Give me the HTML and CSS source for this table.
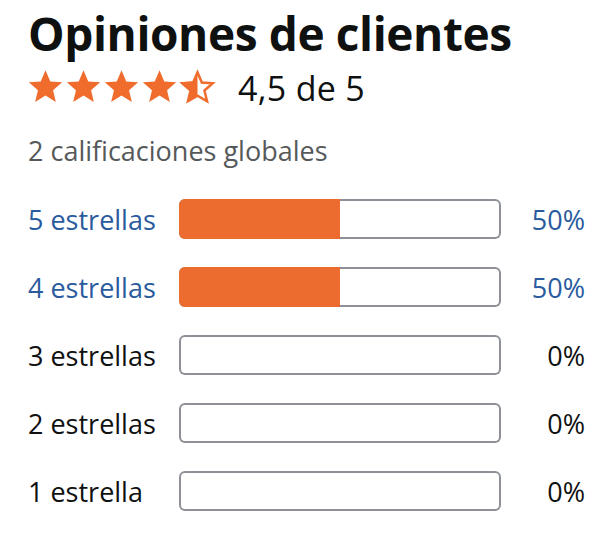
FILE: index.html
```html
<!DOCTYPE html>
<html lang="es">
<head>
<meta charset="utf-8">
<link rel="stylesheet" href="styles.css">
</head>
<body>
<div class="reviews">
  <h2 class="title">Opiniones de clientes</h2>
  <div class="rating">
    <div class="stars">
      <svg class="star" viewBox="0 0 24 24"><path class="full" d="M12 1.5l3.1 7.2 7.7.6-5.9 5.1 1.8 7.6L12 17.9l-6.7 4.1 1.8-7.6-5.9-5.1 7.7-.6z"/></svg>
      <svg class="star" viewBox="0 0 24 24"><path class="full" d="M12 1.5l3.1 7.2 7.7.6-5.9 5.1 1.8 7.6L12 17.9l-6.7 4.1 1.8-7.6-5.9-5.1 7.7-.6z"/></svg>
      <svg class="star" viewBox="0 0 24 24"><path class="full" d="M12 1.5l3.1 7.2 7.7.6-5.9 5.1 1.8 7.6L12 17.9l-6.7 4.1 1.8-7.6-5.9-5.1 7.7-.6z"/></svg>
      <svg class="star" viewBox="0 0 24 24"><path class="full" d="M12 1.5l3.1 7.2 7.7.6-5.9 5.1 1.8 7.6L12 17.9l-6.7 4.1 1.8-7.6-5.9-5.1 7.7-.6z"/></svg>
      <svg class="star" viewBox="0 0 24 24"><path class="outline" d="M12 2.8l2.8 6.6 7.1.5-5.4 4.7 1.7 7L12 17.9l-6.2 3.7 1.7-7-5.4-4.7 7.1-.5z"/><path class="full" d="M12 1.5V17.9l-6.7 4.1 1.8-7.6-5.9-5.1 7.7-.6z"/></svg>
    </div>
    <span class="score">4,5 de 5</span>
  </div>
  <p class="total">2 calificaciones globales</p>
  <div class="histogram">
    <div class="row link"><span class="label">5 estrellas</span><div class="bar"><div class="fill" style="width:50%"></div></div><span class="pct">50%</span></div>
    <div class="row link"><span class="label">4 estrellas</span><div class="bar"><div class="fill" style="width:50%"></div></div><span class="pct">50%</span></div>
    <div class="row"><span class="label">3 estrellas</span><div class="bar"></div><span class="pct">0%</span></div>
    <div class="row"><span class="label">2 estrellas</span><div class="bar"></div><span class="pct">0%</span></div>
    <div class="row"><span class="label">1 estrella</span><div class="bar"></div><span class="pct">0%</span></div>
  </div>
</div>
</body>
</html>
```
FILE: styles.css
```css
* { box-sizing: border-box; }
body {
  margin: 0;
  background: #fff;
  font-family: "Open Sans", "Noto Sans", sans-serif;
  color: #0f1111;
}
.reviews {
  padding: 4px 21px 0 28px;
}
.title {
  margin: 0;
  font-size: 46px;
  font-weight: 700;
  line-height: 58px;
  letter-spacing: -0.4px;
}
.rating {
  display: flex;
  align-items: center;
  gap: 22px;
  margin-top: 2px;
}
.stars {
  display: flex;
  gap: 1px;
  margin-left: -1px;
}
.star {
  width: 37px;
  height: 37px;
  display: block;
}
.star .full { fill: #ef6c2d; }
.star .outline { fill: #fff; stroke: #ef6c2d; stroke-width: 1.6; stroke-linejoin: miter; }
.score {
  font-size: 34px;
  line-height: 40px;
  margin-top: 4px;
  letter-spacing: 0.3px;
}
.total {
  margin: 26px 0 0;
  font-size: 27px;
  line-height: 34px;
  color: #565959;
}
.histogram {
  margin-top: 31px;
  display: flex;
  flex-direction: column;
  gap: 28px;
}
.row {
  display: flex;
  align-items: center;
  height: 40px;
  font-size: 27px;
}
.row.link { color: #2a5b9e; }
.label {
  width: 151px;
  white-space: nowrap;
}
.bar {
  width: 322px;
  height: 40px;
  border-radius: 6px;
  overflow: hidden;
  background: #fff;
  box-shadow: inset 0 0 0 2px #8d9096;
}
.fill {
  height: 100%;
  background: #ec6b2f;
}
.pct {
  flex: 1;
  text-align: right;
}
```
